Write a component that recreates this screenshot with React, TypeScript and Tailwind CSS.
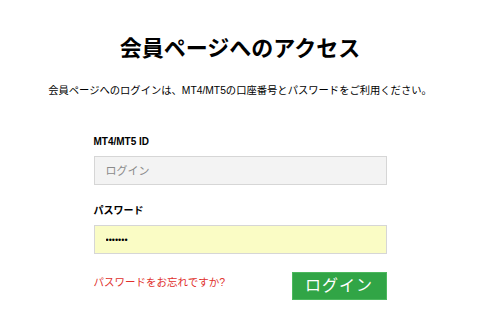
import React, { useState } from 'react';

const FONT = { fontFamily: '"Liberation Sans", "Noto Sans CJK JP", sans-serif' };

const App: React.FC = () => {
  const [loginId, setLoginId] = useState('');
  const [password, setPassword] = useState('1234567');

  return (
    <div className="w-[480px] h-[332px] bg-white overflow-hidden text-black" style={FONT}>
      <div className="flex flex-col items-center pt-[36px]">
        <h1 className="text-[22px] leading-[26px] font-bold">会員ページへのアクセス</h1>
        <p className="mt-[22px] text-[10.3px] leading-[14px]">
          会員ページへのログインは、MT4/MT5の口座番号とパスワードをご利用ください。
        </p>

        <form className="w-[293px] mt-[38px]" onSubmit={(e) => e.preventDefault()}>
          <label className="block text-[10px] leading-[12px] font-bold">MT4/MT5 ID</label>
          <input
            type="text"
            value={loginId}
            onChange={(e) => setLoginId(e.target.value)}
            placeholder="ログイン"
            className="mt-[8px] block w-full h-[29px] px-[11px] bg-[#f3f3f3] border border-[#d6d6d6] text-[11px] placeholder:text-[#8a8a8a] outline-none"
          />

          <label className="block mt-[20px] text-[10px] leading-[12px] font-bold">パスワード</label>
          <input
            type="password"
            value={password}
            onChange={(e) => setPassword(e.target.value)}
            className="mt-[8px] block w-full h-[29px] px-[11px] bg-[#fafcc5] border border-[#d6d6d6] text-[9px] outline-none"
          />

          <div className="mt-[18px] flex items-start justify-between">
            <a href="#" className="mt-[3px] text-[10.5px] leading-[14px] text-[#e0302b]">
              パスワードをお忘れですか?
            </a>
            <button
              type="submit"
              className="w-[95px] h-[28px] bg-[#31a546] border border-[#4cb85e] text-white text-[16px] leading-[20px] tracking-[1px]"
            >
              ログイン
            </button>
          </div>
        </form>
      </div>
    </div>
  );
};

export default App;
